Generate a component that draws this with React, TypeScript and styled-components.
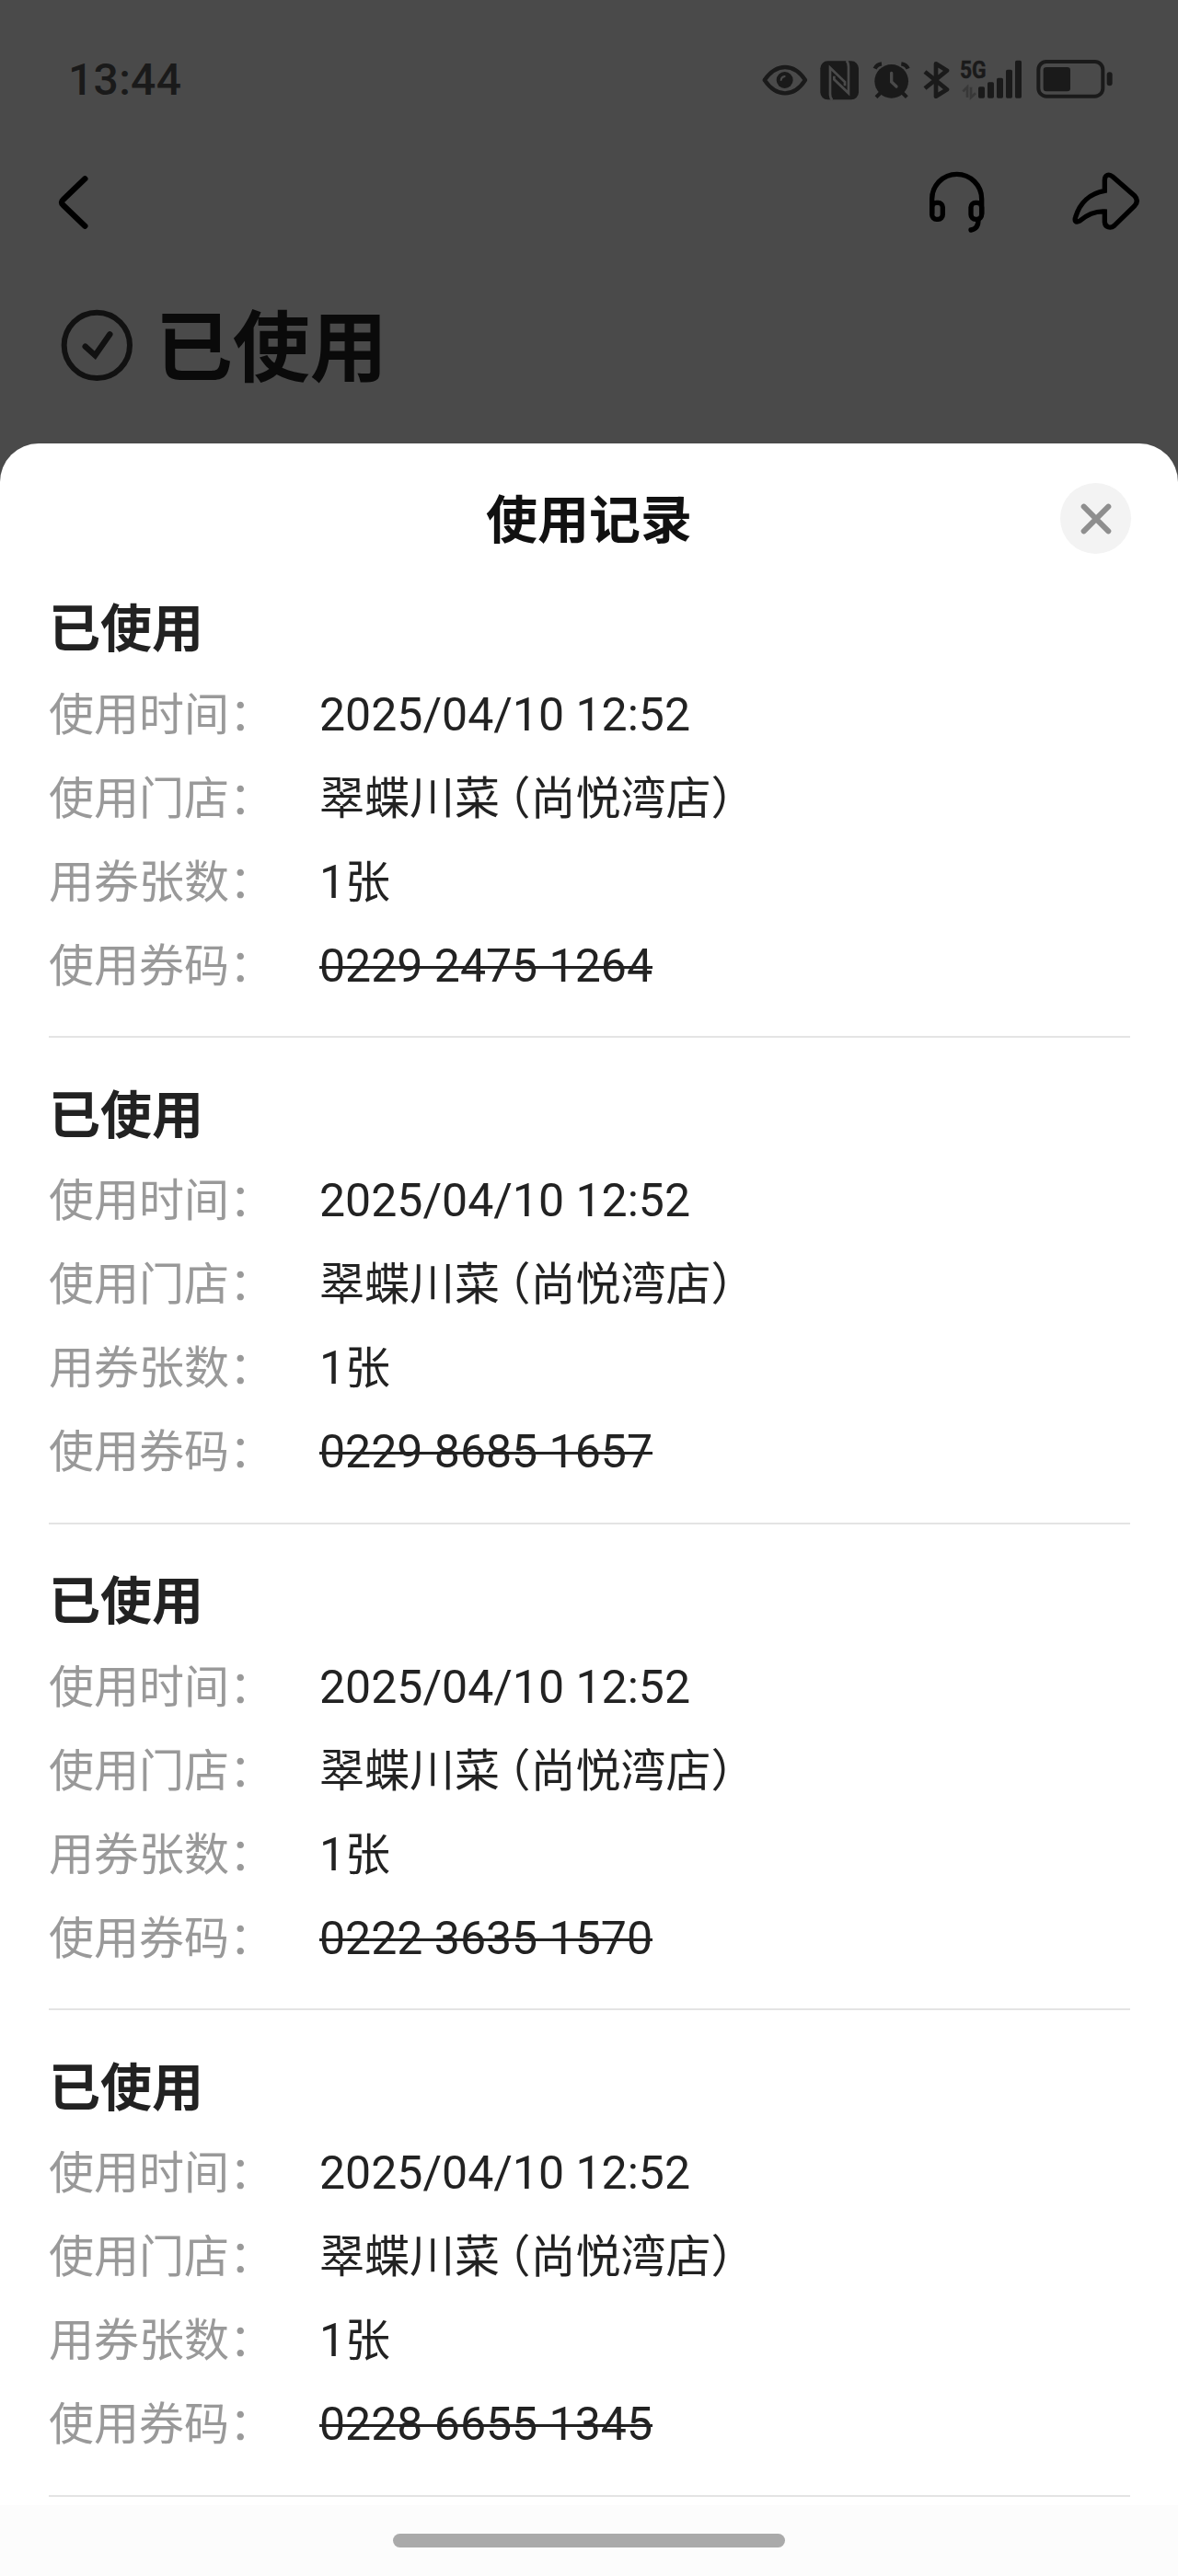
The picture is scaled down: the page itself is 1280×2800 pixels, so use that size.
import React from "react";
import styled, { createGlobalStyle } from "styled-components";

const Global = createGlobalStyle`
  * { box-sizing: border-box; }
  body { margin: 0; background: #4a4a4a; }
`;

const CJK = `"Noto Sans CJK SC", sans-serif`;

const Screen = styled.div`
  width: 1280px;
  height: 2800px;
  display: flex;
  flex-direction: column;
  background: #4a4a4a;
  font-family: Roboto, ${CJK};
  overflow: hidden;
`;

const StatusBar = styled.header`
  height: 174px;
  flex: none;
  display: flex;
  align-items: center;
  justify-content: space-between;
  padding: 0 71px 0 74px;
  color: #1a1a1a;
`;

const Clock = styled.div`
  font-size: 48px;
  line-height: 56px;
  font-weight: 500;
  letter-spacing: 0.3px;
`;

const StatusIcons = styled.div`
  display: flex;
  align-items: center;
`;

const Glyph = styled.svg<{ $w: number; $h: number; $gap?: number }>`
  display: block;
  flex: none;
  width: ${(p) => p.$w / 3}px;
  height: ${(p) => p.$h / 3}px;
  margin-left: ${(p) => (p.$gap ?? 0) / 3}px;
`;

const NavBar = styled.nav`
  height: 92px;
  flex: none;
  display: flex;
  align-items: center;
  justify-content: space-between;
  padding: 0 40.7px 0 63.3px;
`;

const NavActions = styled.div`
  display: flex;
  align-items: center;
`;

const OrderState = styled.div`
  height: 216px;
  flex: none;
  display: flex;
  align-items: center;
  padding: 2px 0 0 66px;
  gap: 24px;
`;

const OrderTitle = styled.h1`
  margin: 0;
  padding-bottom: 7px;
  font: 700 84px/100px ${CJK};
  color: #0a0a0a;
`;

const Sheet = styled.section`
  flex: 1;
  min-height: 0;
  display: flex;
  flex-direction: column;
  background: #fff;
  border-radius: 42px 42px 0 0;
  overflow: hidden;
`;

const SheetHeader = styled.div`
  height: 159px;
  flex: none;
  display: grid;
  grid-template-columns: 77px 1fr 77px;
  align-items: center;
  padding: 4px 51px 0;
`;

const SheetTitle = styled.h2`
  grid-column: 2;
  margin: 0;
  padding-bottom: 6px;
  text-align: center;
  font: 700 56px/80px ${CJK};
  color: #111;
`;

const CloseButton = styled.button`
  width: 77px;
  height: 77px;
  padding: 0;
  border: 0;
  border-radius: 50%;
  background: #f3f3f3;
  display: flex;
  align-items: center;
  justify-content: center;
`;

const Records = styled.div`
  flex: 1;
  min-height: 0;
  padding: 0 52px 0 53px;
`;

const Record = styled.article`
  height: 528.5px;
  padding-top: 41.5px;
  display: flex;
  flex-direction: column;
  border-bottom: 2px solid #e4e4e4;

  &:first-child {
    height: 487px;
    padding-top: 0;
  }
`;

const RecordTitle = styled.h3`
  margin: 0;
  height: 89px;
  flex: none;
  font: 700 56px/75px ${CJK};
  color: #222;
`;

const Field = styled.div`
  height: 91px;
  flex: none;
  display: flex;
  align-items: baseline;
  padding-top: 7.5px;
`;

const Label = styled.div`
  width: 294px;
  flex: none;
  font: 400 49px/70px ${CJK};
  color: #999;
  white-space: nowrap;
`;

const Value = styled.div<{ $void?: boolean }>`
  font: 400 50px/70px Roboto, ${CJK};
  color: #222;
  white-space: nowrap;
  text-decoration: ${(p) => (p.$void ? "line-through" : "none")};
  text-decoration-thickness: 3px;
`;

const Han = styled.span`
  font: 400 49px/70px ${CJK};
`;

const Paren = styled.span`
  margin-left: 9px;
  font-feature-settings: "halt";
`;

const GestureArea = styled.footer`
  height: 77px;
  flex: none;
  display: flex;
  justify-content: center;
  padding-top: 31px;
  background: #fcfcfc;
`;

const GestureBar = styled.div`
  width: 426px;
  height: 15px;
  border-radius: 8px;
  background: #aaa;
`;

const codes = ["0229 2475 1264", "0229 8685 1657", "0222 3635 1570", "0228 6655 1345"];

function Status() {
  return (
    <StatusIcons>
      <Glyph $w={150} $h={150} viewBox="80 66 150 150" fill="none" stroke="#1a1a1a">
        <path d="M88 141C108 113 130 99 155 99S202 113 221 141C202 170 180 184 155 184S108 170 88 141Z" strokeWidth="13" strokeLinejoin="round" />
        <circle cx="154" cy="141" r="27" fill="#1a1a1a" stroke="none" />
        <path d="M142 141Q143 131 154 129" stroke="#4a4a4a" strokeWidth="6" strokeLinecap="round" />
      </Glyph>
      <Glyph $w={126} $h={150} $gap={40} viewBox="270 66 126 150" fill="none">
        <rect x="271" y="79" width="125" height="126" rx="24" fill="#1a1a1a" />
        <path d="M310 206C304 201 303 195 303 186V101L351 147V160" stroke="#4a4a4a" strokeWidth="8" />
        <path d="M356 78C362 83 363 88 363 98V184L316 139V128" stroke="#4a4a4a" strokeWidth="8" />
      </Glyph>
      <Glyph $w={126} $h={150} $gap={45} viewBox="441 66 126 150" fill="none">
        <circle cx="503" cy="145" r="55" fill="#1a1a1a" />
        <path d="M449 104Q455 90 471 88M535 88Q551 90 557 104" stroke="#1a1a1a" strokeWidth="13" />
        <path d="M470 180L453 197M536 180L553 197" stroke="#1a1a1a" strokeWidth="12" />
        <path d="M503 118V147L519 162" stroke="#4a4a4a" strokeWidth="10" strokeLinecap="round" />
      </Glyph>
      <Glyph $w={87} $h={150} $gap={39} viewBox="606 66 87 150" fill="none">
        <path d="M612 114L684 172L648 194V88L684 110L612 168" stroke="#1a1a1a" strokeWidth="14" strokeLinejoin="round" />
      </Glyph>
      <Glyph $w={204} $h={150} $gap={33} viewBox="66 66 204 150" fill="#1a1a1a">
        <text x="66" y="135" fontFamily="Roboto, sans-serif" fontWeight="700" fontSize="80" stroke="#1a1a1a" strokeWidth="1.5" textLength="86" lengthAdjust="spacingAndGlyphs">5G</text>
        <path d="M90 198V164L76 178M102 164V198L117 184" fill="none" stroke="#383838" strokeWidth="8" />
        <rect x="126" y="163" width="21" height="37" rx="5" />
        <rect x="156" y="148" width="21" height="52" rx="5" />
        <rect x="186" y="134" width="21" height="66" rx="5" />
        <rect x="216" y="107" width="21" height="93" rx="5" />
        <rect x="246" y="77" width="21" height="123" rx="5" />
      </Glyph>
      <Glyph $w={249} $h={150} $gap={45} viewBox="315 66 249 150" fill="none">
        <rect x="322" y="81" width="210" height="113" rx="26" stroke="#1a1a1a" strokeWidth="12" />
        <rect x="338" y="99" width="88" height="79" rx="10" fill="#1a1a1a" />
        <rect x="545" y="115" width="18" height="45" rx="9" fill="#1a1a1a" />
      </Glyph>
    </StatusIcons>
  );
}

function Nav() {
  return (
    <NavBar>
      <Glyph $w={100} $h={180} viewBox="190 450 100 180" fill="none">
        <path d="M278 463L207 531Q197 540 207 549L278 617" stroke="#000" strokeWidth="19" strokeLinecap="round" />
      </Glyph>
      <NavActions>
        <Glyph $w={184} $h={210} viewBox="88 75 184 210" fill="none" stroke="#000" strokeWidth="16" strokeLinecap="round" strokeLinejoin="round">
          <path d="M99 215V169A81 81 0 0 1 261 169V215" />
          <rect x="99" y="181" width="35" height="54" rx="15" />
          <rect x="226" y="181" width="35" height="54" rx="15" />
          <path d="M250 236Q251 266 226 270" />
        </Glyph>
        <Glyph $w={226} $h={210} $gap={280} viewBox="552 75 226 210" fill="none" stroke="#000" strokeWidth="16">
          <path d="M661 142V108C661 89 675 86 687 96L758 158Q774 175 758 192L692 256C680 266 663 262 661 244V210C630 208 602 222 580 240C566 248 562 240 566 228C580 180 615 150 661 142Z" />
        </Glyph>
      </NavActions>
    </NavBar>
  );
}

function UsageRecord({ code }: { code: string }) {
  return (
    <Record>
      <RecordTitle>已使用</RecordTitle>
      <Field>
        <Label>使用时间：</Label>
        <Value>2025/04/10 12:52</Value>
      </Field>
      <Field>
        <Label>使用门店：</Label>
        <Value>
          <Han>翠蝶川菜<Paren>（</Paren>尚悦湾店）</Han>
        </Value>
      </Field>
      <Field>
        <Label>用券张数：</Label>
        <Value>1<Han>张</Han></Value>
      </Field>
      <Field>
        <Label>使用券码：</Label>
        <Value $void>{code}</Value>
      </Field>
    </Record>
  );
}

export default function App() {
  return (
    <Screen>
      <Global />
      <StatusBar>
        <Clock>13:44</Clock>
        <Status />
      </StatusBar>
      <Nav />
      <OrderState>
        <Glyph $w={236} $h={236} viewBox="198 886 236 236" fill="none" stroke="#111">
          <circle cx="316" cy="1004" r="107" strokeWidth="18" />
          <path d="M278 1008L310 1037L358 968" strokeWidth="19" strokeLinecap="round" />
        </Glyph>
        <OrderTitle>已使用</OrderTitle>
      </OrderState>
      <Sheet>
        <SheetHeader>
          <SheetTitle>使用记录</SheetTitle>
          <CloseButton aria-label="关闭">
            <Glyph $w={102} $h={102} viewBox="0 0 102 102" fill="none">
              <path d="M11 11L91 91M91 11L11 91" stroke="#8e8e8e" strokeWidth="18" strokeLinecap="round" />
            </Glyph>
          </CloseButton>
        </SheetHeader>
        <Records>
          {codes.map((code) => (
            <UsageRecord key={code} code={code} />
          ))}
        </Records>
        <GestureArea>
          <GestureBar />
        </GestureArea>
      </Sheet>
    </Screen>
  );
}
